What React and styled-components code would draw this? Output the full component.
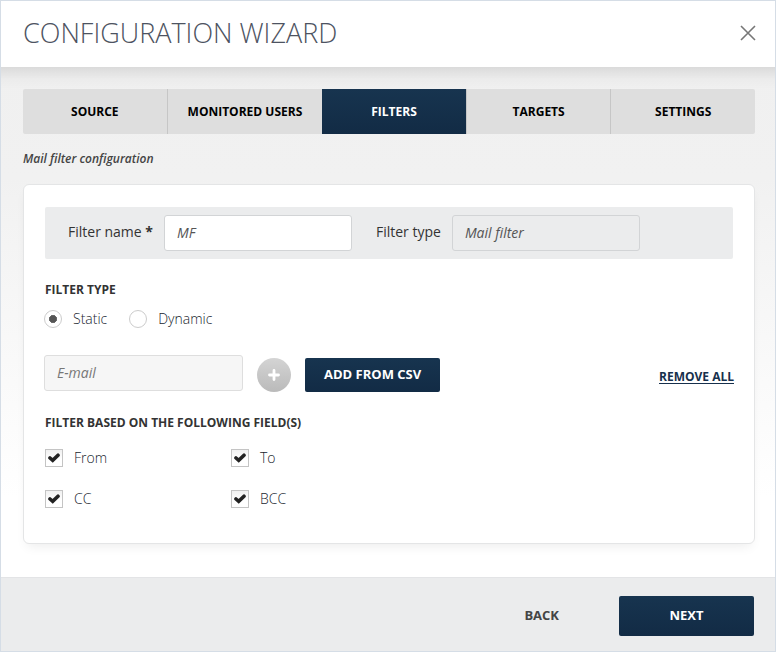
import React, { useState } from "react"
import styled, { createGlobalStyle, css } from "styled-components"

const GlobalStyle = createGlobalStyle`
  * {
    box-sizing: border-box;
  }
  body {
    margin: 0;
    background: #fff;
    color: #20252e;
    font-family: "Open Sans", sans-serif;
    font-size: 14px;
    font-weight: 300;
    line-height: 20px;
  }
  button, input {
    font-family: inherit;
  }
`

const navy = css`
  color: #fff;
  background: linear-gradient(#17344f, #122b45);
`

const Dialog = styled.div`
  display: flex;
  flex-direction: column;
  min-height: 100vh;
  border: 1px solid #d5dde6;
`

const Header = styled.header`
  display: flex;
  align-items: center;
  justify-content: space-between;
  padding: 13px 19px 16px 22px;
`

const Title = styled.h1`
  margin: 0;
  font-size: 27px;
  font-weight: 300;
  line-height: 37px;
  color: #4d5361;
`

const CloseButton = styled.button`
  display: flex;
  padding: 0;
  border: 0;
  background: none;
  color: #777;
  cursor: pointer;
`

const Body = styled.main`
  flex: 1;
  padding: 22px 20px 33px 22px;
  background:
    linear-gradient(rgba(0, 0, 0, 0.09), rgba(0, 0, 0, 0.02) 12px, transparent 22px),
    linear-gradient(#f0f0f0 0, #f1f1f1 110px, #fff 430px);
`

const Tabs = styled.nav`
  display: flex;
  border-radius: 2px;
  overflow: hidden;
`

const Tab = styled.button`
  flex: 1 1 0;
  padding: 0 20px;
  border: 0;
  border-left: 1px solid #c6c6c6;
  background: #dedede;
  color: #000;
  font-size: 12px;
  font-weight: 700;
  line-height: 45px;
  white-space: nowrap;
  cursor: pointer;

  &:first-child {
    border-left: 0;
  }

  ${p => p.$active && css`
    ${navy}
    border-left: 0;
  `}
`

const Hint = styled.p`
  margin: 15px 0;
  font-size: 12px;
  font-style: italic;
  font-weight: 600;
  color: #444;
`

const Card = styled.section`
  padding: 22px 21px 34px;
  border: 1px solid #e4e5e6;
  border-radius: 6px;
  background: #fff;
  box-shadow: 0 6px 12px -4px rgba(0, 0, 0, 0.08);
`

const NameBar = styled.div`
  display: flex;
  align-items: center;
  flex-wrap: wrap;
  gap: 11px;
  padding: 8px 23px;
  border-radius: 2px;
  background: #ebeced;
`

const BarLabel = styled.label`
  padding-bottom: 2px;
  color: #333;
  font-weight: 400;

  input + & {
    margin-left: 13px;
  }
`

const TextInput = styled.input`
  width: ${p => p.$width || 188}px;
  height: 36px;
  padding: 0 12px 2px;
  border: 1px solid #d2d4d6;
  border-radius: 3px;
  background: #fff;
  color: #555;
  font-size: 14px;
  font-style: italic;
  font-weight: 400;
  outline: none;

  &:read-only {
    background: #ebeced;
  }

  ${p => p.$muted && css`
    border-color: #dedede;
    background: #f6f6f6;
  `}

  &::placeholder {
    color: #777;
    opacity: 1;
  }
`

const Group = styled.fieldset`
  margin: 21px 0 0;
  padding: 0;
  border: 0;
`

const Legend = styled.legend`
  padding: 0;
  font-size: 12px;
  font-weight: 700;
  color: #333;
`

const Radios = styled.div`
  display: flex;
  gap: 22px;
  margin: 9px -1px 0;
`

const Option = styled.label`
  display: flex;
  align-items: center;
  gap: 11px;
  cursor: pointer;
`

const Radio = styled.input`
  appearance: none;
  width: 18px;
  height: 18px;
  margin: 0;
  border: 1px solid #ccc;
  border-radius: 50%;
  background: #fff;

  &:checked {
    background: radial-gradient(circle, #555 0 3px, #777 4px, #fff 4px);
  }
`

const AddRow = styled.div`
  display: flex;
  align-items: flex-start;
  margin: 26px -1px 0;
`

const AddButton = styled.button`
  display: flex;
  align-items: center;
  justify-content: center;
  width: 34px;
  height: 34px;
  margin: 3px 14px 0;
  padding: 0;
  border: 0;
  border-radius: 50%;
  background: linear-gradient(#d4d4d4, #bababa);
  color: #fff;
  cursor: pointer;
`

const PrimaryButton = styled.button`
  ${navy}
  min-width: 135px;
  height: ${p => (p.$small ? 34 : 40)}px;
  margin-top: ${p => (p.$small ? 3 : 0)}px;
  padding: 0 19px 2px;
  border: 0;
  border-radius: 2px;
  font-size: 13px;
  font-weight: 700;
  cursor: pointer;
`

const RemoveLink = styled.a`
  margin: 12px 0 0 auto;
  color: #17304c;
  font-size: 12px;
  font-weight: 700;
  text-underline-offset: 2px;
`

const Checks = styled.div`
  display: grid;
  grid-template-columns: 186px 186px;
  row-gap: 21px;
  margin-top: 15px;
`

const CheckBox = styled.span`
  display: grid;
  width: 18px;
  height: 18px;

  > * {
    grid-area: 1 / 1;
  }

  input {
    appearance: none;
    width: 18px;
    height: 18px;
    margin: 0;
    border: 1px solid #c4c4c4;
    background: linear-gradient(#f0f0f0, #fff 60%);
  }

  svg {
    place-self: center;
    pointer-events: none;
    visibility: hidden;
  }

  input:checked + svg {
    visibility: visible;
  }
`

const Footer = styled.footer`
  display: flex;
  align-items: center;
  justify-content: flex-end;
  gap: 60px;
  padding: 18px 21px 15px;
  border-top: 1px solid #e3e4e6;
  background: #ebeced;
`

const BackButton = styled.button`
  padding: 0 0 2px;
  border: 0;
  background: none;
  color: #444;
  font-size: 13px;
  font-weight: 700;
  cursor: pointer;
`

const CloseIcon = () => (
  <svg width="16" height="16" viewBox="0 0 16 16" aria-hidden="true">
    <path d="M1 1L15 15M15 1L1 15" stroke="currentColor" strokeWidth="1.6" />
  </svg>
)

const PlusIcon = () => (
  <svg width="12" height="12" viewBox="0 0 12 12" aria-hidden="true">
    <path d="M6 1.5V10.5M1.5 6H10.5" stroke="currentColor" strokeWidth="2.8" strokeLinecap="round" />
  </svg>
)

const TickIcon = () => (
  <svg width="12" height="10" viewBox="0 0 12 10" aria-hidden="true">
    <path d="M2 5L4.7 7.3L10 2.2" fill="none" stroke="#222" strokeWidth="3.6" strokeLinecap="round" />
  </svg>
)

const Check = ({ label }) => (
  <Option>
    <CheckBox>
      <input type="checkbox" defaultChecked />
      <TickIcon />
    </CheckBox>
    {label}
  </Option>
)

const tabs = ["SOURCE", "MONITORED USERS", "FILTERS", "TARGETS", "SETTINGS"]

export default () => {
  const [active, setActive] = useState("FILTERS")

  return (
    <Dialog>
      <GlobalStyle />
      <Header>
        <Title>CONFIGURATION WIZARD</Title>
        <CloseButton aria-label="Close">
          <CloseIcon />
        </CloseButton>
      </Header>

      <Body>
        <Tabs>
          {tabs.map(tab => (
            <Tab key={tab} $active={tab === active} onClick={() => setActive(tab)}>
              {tab}
            </Tab>
          ))}
        </Tabs>
        <Hint>Mail filter configuration</Hint>

        <Card>
          <NameBar>
            <BarLabel htmlFor="name">
              Filter name <b>*</b>
            </BarLabel>
            <TextInput id="name" defaultValue="MF" />
            <BarLabel htmlFor="type">Filter type</BarLabel>
            <TextInput id="type" value="Mail filter" readOnly />
          </NameBar>

          <Group>
            <Legend>FILTER TYPE</Legend>
            <Radios>
              <Option>
                <Radio type="radio" name="kind" defaultChecked />
                Static
              </Option>
              <Option>
                <Radio type="radio" name="kind" />
                Dynamic
              </Option>
            </Radios>
          </Group>

          <AddRow>
            <TextInput $width={199} $muted placeholder="E-mail" aria-label="E-mail" />
            <AddButton aria-label="Add">
              <PlusIcon />
            </AddButton>
            <PrimaryButton $small>ADD FROM CSV</PrimaryButton>
            <RemoveLink href="#">REMOVE ALL</RemoveLink>
          </AddRow>

          <Group>
            <Legend>FILTER BASED ON THE FOLLOWING FIELD(S)</Legend>
            <Checks>
              <Check label="From" />
              <Check label="To" />
              <Check label="CC" />
              <Check label="BCC" />
            </Checks>
          </Group>
        </Card>
      </Body>

      <Footer>
        <BackButton>BACK</BackButton>
        <PrimaryButton>NEXT</PrimaryButton>
      </Footer>
    </Dialog>
  )
}
